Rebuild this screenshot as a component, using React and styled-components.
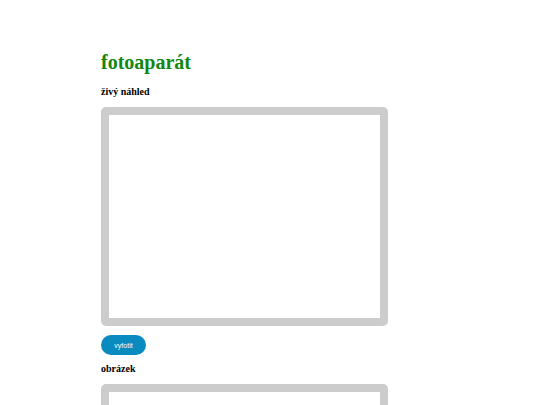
import React from "react";
import styled, { createGlobalStyle } from "styled-components";

const Global = createGlobalStyle`
  html, body { margin: 0; padding: 0; background: #fff; }
  body { font-family: "Liberation Serif", "Times New Roman", serif; }
`;

const Page = styled.main`
  padding: 51px 0 0 101px;
  display: flex;
  flex-direction: column;
  align-items: flex-start;
`;

const Title = styled.h1`
  margin: 0 0 12px;
  font-size: 20px;
  font-weight: bold;
  color: #118811;
  line-height: 23px;
`;

const Label = styled.h2`
  margin: 0 0 9px;
  font-size: 10px;
  font-weight: bold;
  line-height: 12px;
  color: #000;
`;

const Frame = styled.div`
  width: 271px;
  height: 203px;
  border: 8px solid #cccccc;
  border-radius: 5px;
  background: #fff;
  margin-bottom: 9px;
`;

const Button = styled.button`
  width: 45px;
  height: 20px;
  border: none;
  border-radius: 10px;
  background: #0a8bbf;
  color: #fff;
  font-family: "Liberation Sans", Arial, sans-serif;
  font-size: 7px;
  padding: 0;
  margin-bottom: 8px;
  cursor: pointer;
`;

export default function App() {
  return (
    <>
      <Global />
      <Page>
        <Title>fotoaparát</Title>
        <Label>živý náhled</Label>
        <Frame />
        <Button>vyfotit</Button>
        <Label>obrázek</Label>
        <Frame />
      </Page>
    </>
  );
}
